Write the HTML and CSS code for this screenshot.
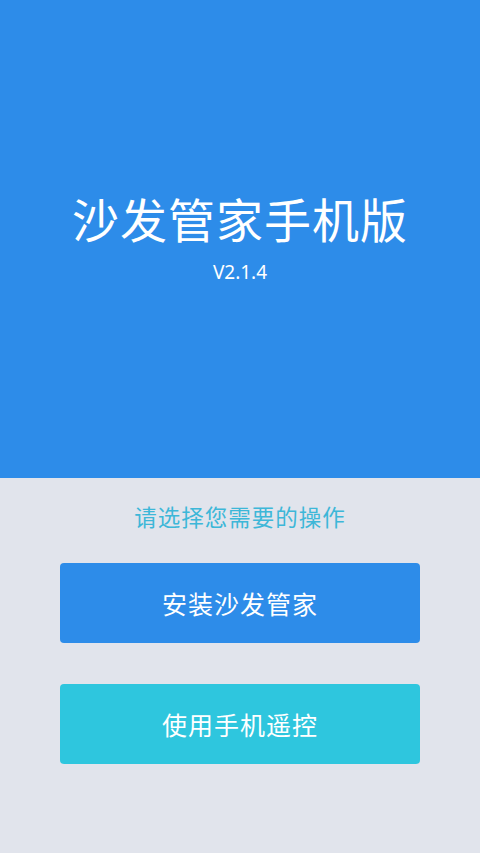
FILE: index.html
```html
<!DOCTYPE html>
<html lang="zh">
<head>
<meta charset="utf-8">
<link rel="stylesheet" href="styles.css">
</head>
<body>
<div class="hero">
  <h1 class="title">沙发管家手机版</h1>
  <div class="version">V2.1.4</div>
</div>
<div class="panel">
  <div class="prompt">请选择您需要的操作</div>
  <div class="btn btn-install">安装沙发管家</div>
  <div class="btn btn-remote">使用手机遥控</div>
</div>
</body>
</html>
```
FILE: styles.css
```css
html, body {
  margin: 0;
  padding: 0;
  height: 100%;
}
body {
  background: #e1e4ec;
  font-family: "Noto Sans CJK SC", "Noto Sans", sans-serif;
  width: 480px;
  height: 853px;
  overflow: hidden;
}
.hero {
  height: 478px;
  background: #2d8ce9;
  display: flex;
  flex-direction: column;
  align-items: center;
  color: #fff;
}
.title {
  margin: 186px 0 0;
  font-size: 47px;
  font-weight: 400;
  line-height: 64px;
  letter-spacing: 1px;
}
.version {
  margin-top: 11px;
  font-size: 19px;
  line-height: 22px;
  font-family: "Noto Sans", "Roboto", sans-serif;
}
.panel {
  display: flex;
  flex-direction: column;
  align-items: center;
}
.prompt {
  margin-top: 22px;
  font-size: 22.5px;
  line-height: 32px;
  color: #3db7d8;
  letter-spacing: 1px;
}
.btn {
  width: 360px;
  height: 80px;
  border-radius: 4px;
  color: #fff;
  font-size: 25px;
  display: flex;
  align-items: center;
  justify-content: center;
  letter-spacing: 1px;
  box-sizing: border-box;
}
.btn-install {
  margin-top: 31px;
  background: #2d8ce9;
}
.btn-remote {
  margin-top: 41px;
  background: #2ec6de;
}
```
